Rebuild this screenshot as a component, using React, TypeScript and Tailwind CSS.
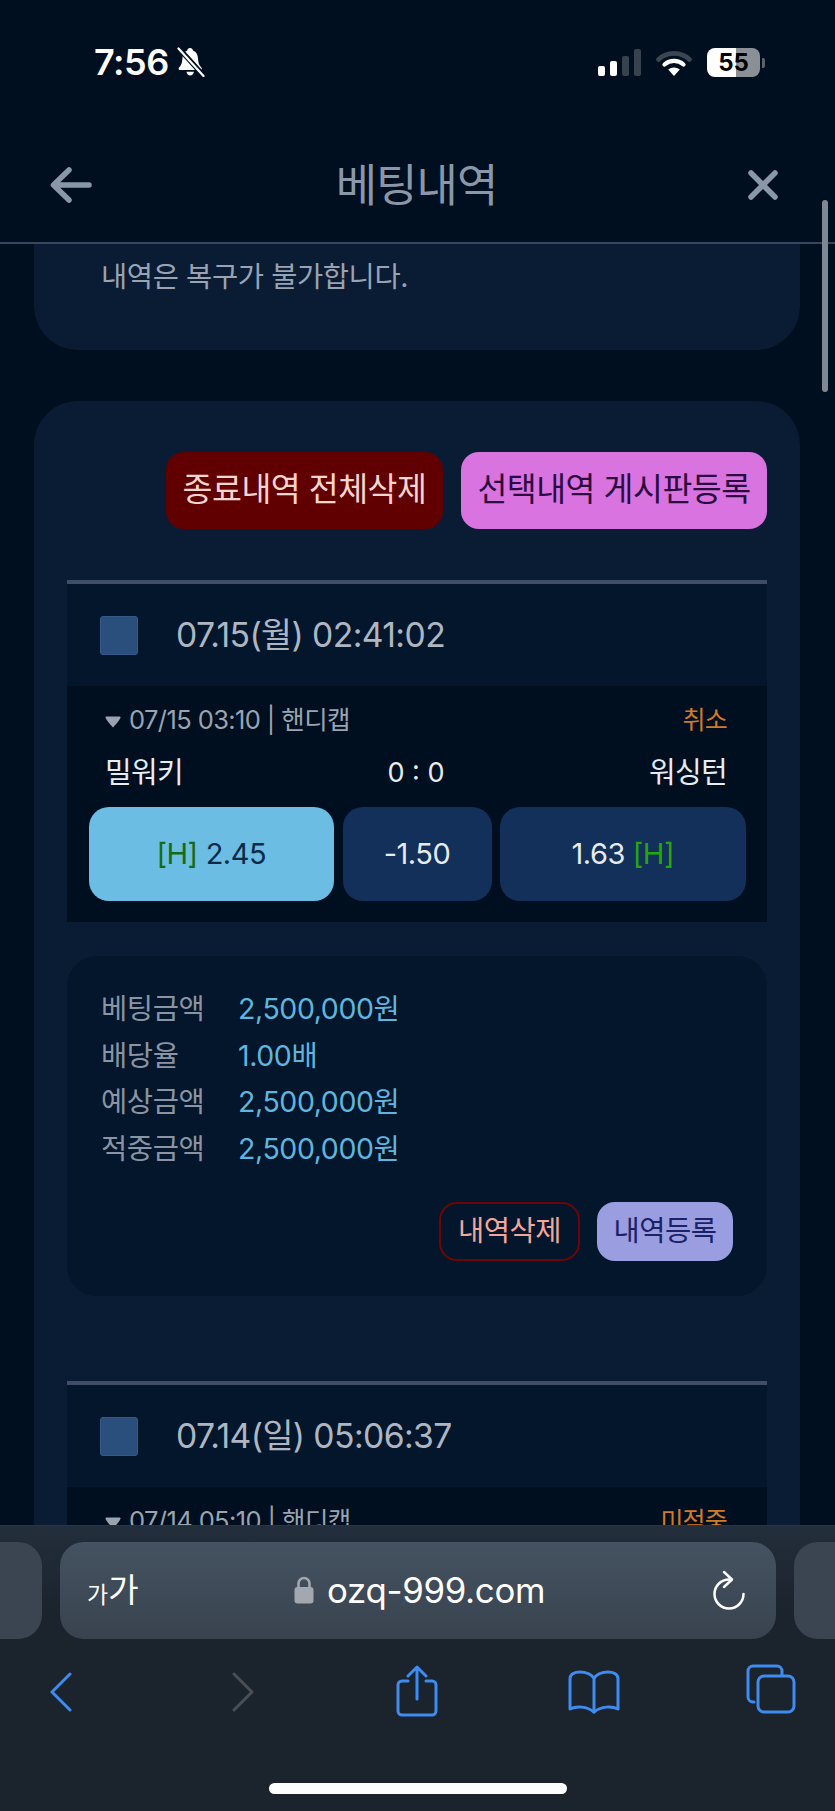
import React from "react";

const font = "[font-family:Inter,'Noto_Sans_CJK_KR',sans-serif]";

function BellOff() {
  return (
    <svg width="29" height="30" viewBox="0 0 29 30" className="ml-[7px]">
      <path d="M14 1c-1.6 0-2.6 1-2.7 2.6C8 4.8 6.6 8 6.4 11.500c-.2 4.200-1 6.500-3.400 9-.8 1-.4 2.500 1.200 2.500h20c1.600 0 2-1.500 1.200-2.500-2.400-2.500-3.200-4.800-3.400-9C21.800 8 20.300 4.800 17 3.600 16.800 2 15.700 1 14 1z" fill="#fff" />
      <path d="M10.500 24.800c.4 2.200 1.800 3.700 3.700 3.700s3.300-1.500 3.700-3.700z" fill="#fff" />
      <path d="M3.500 2 27 28" stroke="#000f20" strokeWidth="5" />
      <path d="M2.500 1.500 27.500 29" stroke="#fff" strokeWidth="2.200" strokeLinecap="round" />
    </svg>
  );
}

function Signal() {
  return (
    <div className="flex items-end gap-[5px] h-[27px]">
      <div className="w-[7px] h-[10px] rounded-[2px] bg-white" />
      <div className="w-[7px] h-[15px] rounded-[2px] bg-white" />
      <div className="w-[7px] h-[20px] rounded-[2px] bg-[#36434f]" />
      <div className="w-[7px] h-[27px] rounded-[2px] bg-[#36434f]" />
    </div>
  );
}

function Wifi() {
  return (
    <svg width="36" height="28" viewBox="0 0 36 28">
      <path d="M2.500 10.500C11 2.300 25 2.300 33.500 10.500" stroke="#3a4753" strokeWidth="4.600" fill="none" strokeLinecap="round" />
      <path d="M8.500 15.500c5.500-4.900 13.500-4.900 19 0" stroke="#fff" strokeWidth="4.200" fill="none" strokeLinecap="round" />
      <path d="M18 27l-5.800-6.500c3.400-2.700 8.200-2.700 11.600 0z" fill="#fff" />
    </svg>
  );
}

function Battery() {
  return (
    <div className="flex items-center gap-[2px]">
      <div className="w-[53px] h-[29px] rounded-[8px] bg-[linear-gradient(90deg,#ffffff_55%,#8b9097_55%)] flex items-center justify-center text-[24px] font-bold text-black leading-none">
        55
      </div>
      <div className="w-[3px] h-[10px] rounded-r-[2px] bg-[#5a6169]" />
    </div>
  );
}

function BetBlock({
  date,
  meta,
  status,
  teams,
}: {
  date: string;
  meta: string;
  status: string;
  teams?: { home: string; away: string; left: string; mid: string; right: string };
}) {
  return (
    <section className="flex flex-col">
      <div className="h-[4px] bg-[#3f4e66]" />
      <div className="h-[102px] bg-[#04162b] flex items-center pl-[33px]">
        <div className="w-[38px] h-[39px] rounded-[3px] bg-[#2a4f7c] border border-[#34598a]" />
        <div className="ml-[38px] text-[33.700px] tracking-[-0.6px] text-[#aeb6c2] leading-none">{date}</div>
      </div>
      <div className="bg-[#000f20] flex flex-col pt-[19px] pb-[21px]">
        <div className="flex items-center justify-between pl-[38px] pr-[40px] h-[30px]">
          <div className="flex items-center text-[#9aa3af] text-[25.500px] tracking-[-0.6px] leading-none">
            <svg width="16" height="12" viewBox="0 0 16 12" className="mr-[8px] mt-[3px]">
              <path d="M0.500 1.500Q0.500 0.500 1.500 0.500H14.500Q15.500 0.500 15.500 1.500Q15 4 8 11.500Q1 4 0.500 1.500z" fill="#9aa3af" />
            </svg>
            {meta}
          </div>
          <div className="text-[#d27a27] text-[25px] tracking-[-0.8px] leading-none">{status}</div>
        </div>
        {teams && (
          <>
            <div className="flex items-center justify-between pl-[38px] pr-[40px] mt-[21px] h-[32px] text-[29px] text-[#e8ebef] tracking-[-0.7px] leading-none">
              <div className="w-[120px]">{teams.home}</div>
              <div className="text-[27px] tracking-[0px]">0 : 0</div>
              <div className="w-[120px] text-right">{teams.away}</div>
            </div>
            <div className="flex gap-[8.500px] pl-[21.500px] pr-[21.500px] mt-[19px] h-[94px] text-[29px] tracking-[-0.5px]">
              <div className="flex-1 rounded-[20px] bg-[#6bbde3] text-[#0d2b49] flex items-center justify-center gap-[8px]">
                <span className="text-[#146b14]">[H]</span>
                <span>{teams.left}</span>
              </div>
              <div className="w-[149px] rounded-[20px] bg-[#123059] text-[#e6ebf1] flex items-center justify-center">{teams.mid}</div>
              <div className="flex-1 rounded-[20px] bg-[#123059] text-[#e6ebf1] flex items-center justify-center gap-[8px]">
                <span>{teams.right}</span>
                <span className="text-[#22a80c]">[H]</span>
              </div>
            </div>
          </>
        )}
      </div>
    </section>
  );
}

function Row({ label, value }: { label: string; value: string }) {
  return (
    <div className="flex items-center h-[46.700px]">
      <div className="w-[137px] text-[#8a94a3] tracking-[-0.4px]">{label}</div>
      <div className="text-[#5fb5de] tracking-[-0.4px]">{value}</div>
    </div>
  );
}

function Toolbar() {
  const stroke = "#3f8cf0";
  return (
    <div className="absolute left-0 right-0 top-[1525px] h-[286px] bg-[linear-gradient(180deg,#232e3c_0%,#1b232d_30%,#1b232d_100%)] border-t border-[#2a3442]">
      <div className="flex items-stretch gap-[18px] h-[97px] mt-[16px]">
        <div className="w-[42px] rounded-r-[24px] bg-[#3b4551]" />
        <div className="w-[716px] rounded-[24px] bg-[linear-gradient(180deg,#445261_0%,#39434f_100%)] relative flex items-center justify-between pl-[27px] pr-[30px]">
          <div className="text-white leading-none flex items-end">
            <span className="text-[23px]">가</span>
            <span className="text-[33px] tracking-[-1px]">가</span>
          </div>
          <div className="absolute left-[234px] top-[34px] flex items-center">
            <svg width="20" height="28" viewBox="0 0 20 28">
              <path d="M4.500 12V7.500a5.500 5.500 0 0 1 11 0V12" stroke="#a2a7b0" strokeWidth="2.600" fill="none" />
              <rect x="0.500" y="11" width="19" height="16.500" rx="3" fill="#a2a7b0" />
            </svg>
          </div>
          <div className="absolute left-[267px] top-[26px] text-[34.800px] leading-[44px] text-white tracking-[-0.3px]">ozq-999.com</div>
          <svg width="34" height="42" viewBox="0 0 34 42" fill="none" stroke="#fff" strokeWidth="2.500" strokeLinecap="round" strokeLinejoin="round">
            <path d="M17 9.500A14.500 14.500 0 1 0 31.500 24" />
            <path d="M12 2l8 7.500-8 7.500" />
          </svg>
        </div>
        <div className="flex-1 rounded-l-[24px] bg-[#3b4551]" />
      </div>
      <div className="flex items-center justify-between mt-[27px] h-[52px] pl-[48px] pr-[44px] relative">
        <svg width="24" height="40" viewBox="0 0 24 40" fill="none" stroke={stroke} strokeWidth="3" strokeLinecap="round" strokeLinejoin="round" className="absolute left-[49px] top-[6px]">
          <path d="M21 2 3 20l18 18" />
        </svg>
        <svg width="24" height="40" viewBox="0 0 24 40" fill="none" stroke="#4a4f56" strokeWidth="3" strokeLinecap="round" strokeLinejoin="round" className="absolute left-[231px] top-[6px]">
          <path d="M3 2l18 18L3 38" />
        </svg>
        <svg width="42" height="52" viewBox="0 0 42 52" fill="none" stroke={stroke} strokeWidth="3" strokeLinecap="round" strokeLinejoin="round" className="absolute left-[396px] top-[-1px]">
          <path d="M12 16H6a4 4 0 0 0-4 4v26a4 4 0 0 0 4 4h30a4 4 0 0 0 4-4V20a4 4 0 0 0-4-4h-6" />
          <path d="M21 34V2M12 11l9-9 9 9" />
        </svg>
        <svg width="52" height="44" viewBox="0 0 52 44" fill="none" stroke={stroke} strokeWidth="3" strokeLinecap="round" strokeLinejoin="round" className="absolute left-[568px] top-[4px]">
          <path d="M26 8C22 3 17 2 12 2 7 2 2 4 2 9v30c6-3 17-3 24 3 7-6 18-6 24-3V9c0-5-5-7-10-7-5 0-10 1-14 6z" />
          <path d="M26 8v34" />
        </svg>
        <svg width="50" height="50" viewBox="0 0 50 50" fill="none" stroke={stroke} strokeWidth="3" strokeLinecap="round" strokeLinejoin="round" className="absolute left-[746px] top-[-2px]">
          <rect x="12" y="12" width="36" height="36" rx="6" />
          <path d="M8 38H7a5 5 0 0 1-5-5V7a5 5 0 0 1 5-5h24a5 5 0 0 1 5 5v4" />
        </svg>
      </div>
      <div className="w-[298px] h-[11px] rounded-full bg-white mx-auto mt-[65px]" />
    </div>
  );
}

export default function App() {
  return (
    <div className={`relative w-[835px] h-[1811px] overflow-hidden bg-[#000f20] ${font}`}>
      <header className="h-[244px] border-b-2 border-[#37475e] bg-[#000f20] flex flex-col">
        <div className="h-[124px] flex items-start justify-between pl-[94px] pr-[70px] pt-[46px]">
          <div className="flex items-center text-white text-[36px] font-semibold leading-[32px] tracking-[-0.5px]">
            7:56
            <BellOff />
          </div>
          <div className="flex items-center gap-[15px] mt-[2px]">
            <Signal />
            <Wifi />
            <Battery />
          </div>
        </div>
        <div className="flex items-center justify-between pl-[50px] pr-[57px] h-[70px] mt-[26px]">
          <svg width="42" height="36" viewBox="0 0 42 36" fill="none" stroke="#8a97a9" strokeWidth="5.500" strokeLinecap="round" strokeLinejoin="round">
            <path d="M39 18H4M19 3 3.500 18 19 33" />
          </svg>
          <div className="mr-[7px] text-[45px] text-[#8a97a9] tracking-[-1px] leading-none">베팅내역</div>
          <svg width="30" height="30" viewBox="0 0 30 30" fill="none" stroke="#8a97a9" strokeWidth="5.500" strokeLinecap="round">
            <path d="M3 3l24 24M27 3 3 27" />
          </svg>
        </div>
      </header>

      <main className="pl-[34px] pr-[35px]">
        <div className="h-[106px] rounded-b-[44px] bg-[#0a1c34] pl-[67px] pt-[15px] text-[28.500px] text-[#99a3b1] tracking-[-0.4px] leading-[36px]">
          내역은 복구가 불가합니다.
        </div>

        <div className="mt-[51px] rounded-t-[44px] bg-[#0a1c34] px-[33px] pt-[51px] pb-[60px] flex flex-col">
          <div className="flex justify-end gap-[18px] h-[77px]">
            <button className="w-[277px] rounded-[18px] bg-[#600000] text-[#f5d5cf] text-[32.500px] tracking-[-0.5px]">종료내역 전체삭제</button>
            <button className="w-[306px] rounded-[18px] bg-[#d873e0] text-[#2a0a3f] text-[32.500px] tracking-[-0.5px]">선택내역 게시판등록</button>
          </div>
          <div className="mt-[51px]">
            <BetBlock
              date="07.15(월) 02:41:02"
              meta="07/15 03:10 | 핸디캡"
              status="취소"
              teams={{ home: "밀워키", away: "워싱턴", left: "2.45", mid: "-1.50", right: "1.63" }}
            />
          </div>
          <div className="mt-[34px] h-[340px] rounded-[30px] bg-[#04162b] pl-[34px] pr-[34px] pt-[30px] flex flex-col text-[28.500px]">
            <Row label="베팅금액" value="2,500,000원" />
            <Row label="배당율" value="1.00배" />
            <Row label="예상금액" value="2,500,000원" />
            <Row label="적중금액" value="2,500,000원" />
            <div className="flex justify-end gap-[17px] mt-[29px] h-[59px] text-[28.500px] tracking-[-0.5px]">
              <button className="w-[141px] rounded-[18px] border-2 border-[#6b0606] text-[#f2a79b]">내역삭제</button>
              <button className="w-[136px] rounded-[18px] bg-[#9a9ddf] text-[#1c2268]">내역등록</button>
            </div>
          </div>
          <div className="mt-[85px]">
            <BetBlock date="07.14(일) 05:06:37" meta="07/14 05:10 | 핸디캡" status="미적중" />
          </div>
        </div>
      </main>

      <div className="absolute left-[822px] top-[200px] w-[6px] h-[192px] rounded-full bg-[#7e8794]" />
      <Toolbar />
    </div>
  );
}
